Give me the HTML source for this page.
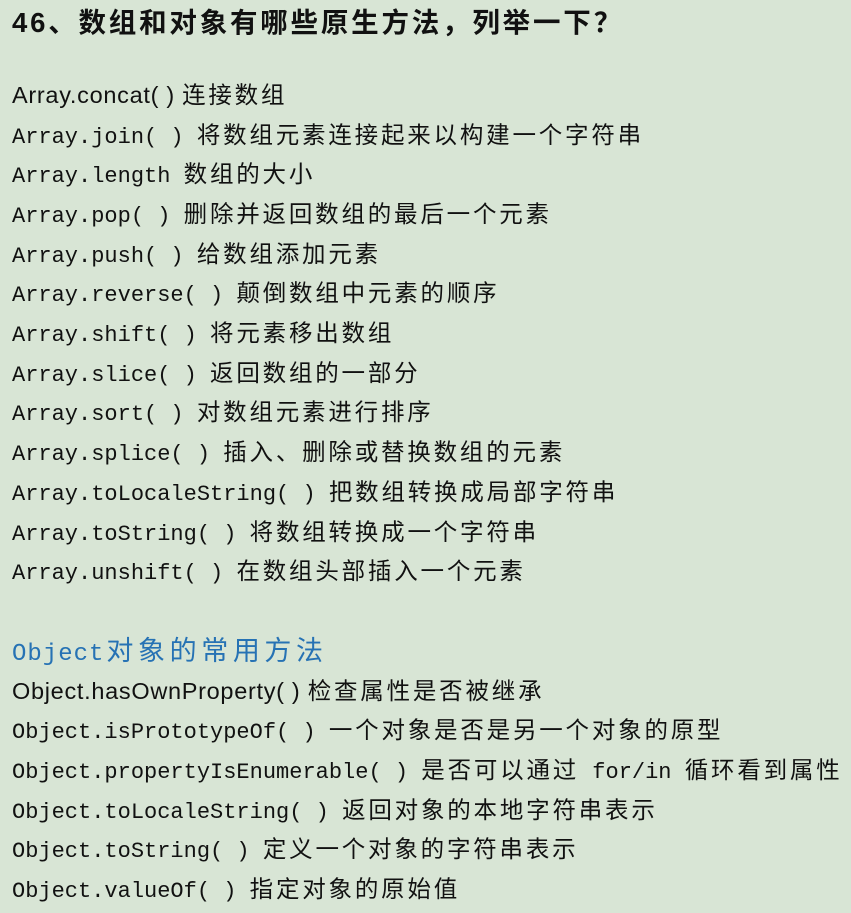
<!DOCTYPE html>
<html><head><meta charset="utf-8"><style>
body{margin:0;width:851px;height:910px;background:#d8e5d5;overflow:hidden;color:#111;}
.l{position:absolute;left:12px;height:40px;line-height:40px;white-space:nowrap;}
.m{font-family:"Liberation Mono","Noto Sans CJK SC",monospace;font-size:22px;}
.c{font-family:"Noto Sans CJK SC",sans-serif;font-size:23.5px;letter-spacing:2.8px;}
.s{font-family:"Liberation Sans",sans-serif;font-size:23.5px;letter-spacing:0.7px;}
</style></head><body>
<div class="l" style="top:3px;font-family:'Liberation Sans','Noto Sans CJK SC',sans-serif;font-size:27.5px;font-weight:bold;letter-spacing:2.8px">46、数组和对象有哪些原生方法，列举一下？</div>

<div class="l" style="top:73px"><span class="s">Array.concat( ) </span><span class="c">连接数组</span></div>
<div class="l" style="top:113px"><span class="m">Array.join( ) </span><span class="c">将数组元素连接起来以构建一个字符串</span></div>
<div class="l" style="top:152px"><span class="m">Array.length </span><span class="c">数组的大小</span></div>
<div class="l" style="top:192px"><span class="m">Array.pop( ) </span><span class="c">删除并返回数组的最后一个元素</span></div>
<div class="l" style="top:232px"><span class="m">Array.push( ) </span><span class="c">给数组添加元素</span></div>
<div class="l" style="top:271px"><span class="m">Array.reverse( ) </span><span class="c">颠倒数组中元素的顺序</span></div>
<div class="l" style="top:311px"><span class="m">Array.shift( ) </span><span class="c">将元素移出数组</span></div>
<div class="l" style="top:351px"><span class="m">Array.slice( ) </span><span class="c">返回数组的一部分</span></div>
<div class="l" style="top:390px"><span class="m">Array.sort( ) </span><span class="c">对数组元素进行排序</span></div>
<div class="l" style="top:430px"><span class="m">Array.splice( ) </span><span class="c">插入、删除或替换数组的元素</span></div>
<div class="l" style="top:470px"><span class="m">Array.toLocaleString( ) </span><span class="c">把数组转换成局部字符串</span></div>
<div class="l" style="top:510px"><span class="m">Array.toString( ) </span><span class="c">将数组转换成一个字符串</span></div>
<div class="l" style="top:549px"><span class="m">Array.unshift( ) </span><span class="c">在数组头部插入一个元素</span></div>

<div class="l" style="top:629px;color:#2672b4"><span class="m" style="font-size:24px;letter-spacing:1px">Object</span><span class="c" style="font-size:27px;letter-spacing:4.6px;margin-left:2px">对象的常用方法</span></div>
<div class="l" style="top:669px"><span class="s">Object.hasOwnProperty( ) </span><span class="c">检查属性是否被继承</span></div>
<div class="l" style="top:708px"><span class="m">Object.isPrototypeOf( ) </span><span class="c">一个对象是否是另一个对象的原型</span></div>
<div class="l" style="top:748px"><span class="m">Object.propertyIsEnumerable( ) </span><span class="c">是否可以通过</span><span class="m"> for/in </span><span class="c">循环看到属性</span></div>
<div class="l" style="top:788px"><span class="m">Object.toLocaleString( ) </span><span class="c">返回对象的本地字符串表示</span></div>
<div class="l" style="top:827px"><span class="m">Object.toString( ) </span><span class="c">定义一个对象的字符串表示</span></div>
<div class="l" style="top:867px"><span class="m">Object.valueOf( ) </span><span class="c">指定对象的原始值</span></div>
</body></html>
